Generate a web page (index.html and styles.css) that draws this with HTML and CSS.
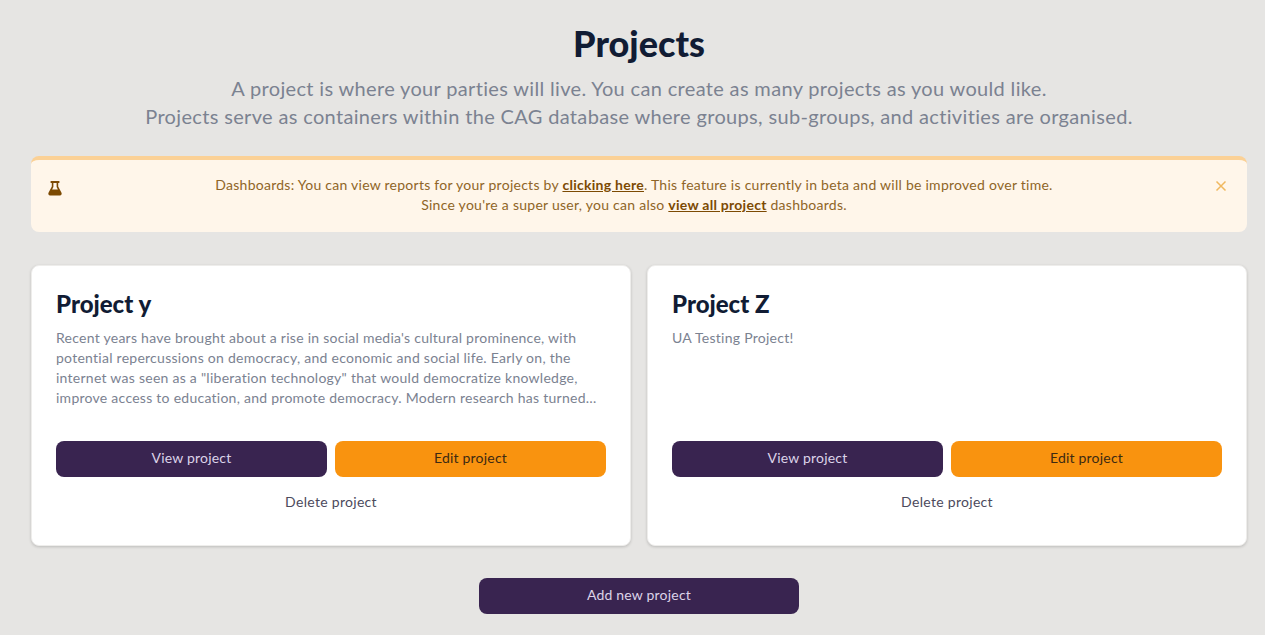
FILE: index.html
```html
<!DOCTYPE html>
<html lang="en">
<head>
<meta charset="utf-8">
<title>Projects</title>
<link rel="stylesheet" href="styles.css">
</head>
<body>
<main class="page">
  <header class="intro">
    <h1 class="title">Projects</h1>
    <p class="lead">A project is where your parties will live. You can create as many projects as you would like.<br>Projects serve as containers within the CAG database where groups, sub-groups, and activities are organised.</p>
  </header>
  <section class="notice">
    <svg class="notice-icon" viewBox="0 0 16 16" width="16" height="16" aria-hidden="true"><path fill="#7c4a03" fill-rule="evenodd" d="M3.6 1h8.8v2h-1.2v3.6l3.3 6.2c.6 1.2-.1 2.7-1.6 2.7H3.1c-1.5 0-2.2-1.5-1.6-2.7l3.3-6.2V3H3.6zM6.4 3v4L5.1 9.4h5.8L9.6 7V3z"/></svg>
    <p class="notice-text">Dashboards: You can view reports for your projects by <a href="#">clicking here</a>. This feature is currently in beta and will be improved over time.<br>Since you're a super user, you can also <a href="#">view all project</a> dashboards.</p>
    <svg class="notice-close" viewBox="0 0 12 12" width="12" height="12" aria-hidden="true"><path d="M1.5 1.5l9 9M10.5 1.5l-9 9" stroke="#f0b85f" stroke-width="1.5" fill="none"/></svg>
  </section>
  <section class="cards">
    <article class="card">
      <h2 class="card-title">Project y</h2>
      <p class="card-text">Recent years have brought about a rise in social media's cultural prominence, with potential repercussions on democracy, and economic and social life. Early on, the internet was seen as a "liberation technology" that would democratize knowledge, improve access to education, and promote democracy. Modern research has turned…</p>
      <div class="card-actions">
        <a class="btn btn-purple" href="#">View project</a>
        <a class="btn btn-orange" href="#">Edit project</a>
      </div>
      <a class="delete" href="#">Delete project</a>
    </article>
    <article class="card">
      <h2 class="card-title">Project Z</h2>
      <p class="card-text">UA Testing Project!</p>
      <div class="card-actions">
        <a class="btn btn-purple" href="#">View project</a>
        <a class="btn btn-orange" href="#">Edit project</a>
      </div>
      <a class="delete" href="#">Delete project</a>
    </article>
  </section>
  <div class="add-row"><a class="btn btn-purple btn-add" href="#">Add new project</a></div>
</main>
</body>
</html>
```
FILE: styles.css
```css
* { box-sizing: border-box; }
html, body { margin: 0; height: 100%; overflow: hidden; }
body { background: #e6e5e3; font-family: "Lato", "Liberation Sans", sans-serif; }
.page { padding: 23px 18px 0 31px; }
.intro { text-align: center; }
.title { margin: 0; font-size: 36px; line-height: 40px; font-weight: 900; color: #111c34; }
.lead { margin: 11px 0 0; font-size: 20px; line-height: 28px; color: #7b8291; letter-spacing: .34px; }
.notice { margin-top: 26px; height: 76px; display: flex; align-items: flex-start; padding: 15px 16px 0; background: #fff6ea; border-top: 4px solid #fbd196; border-radius: 8px; }
.notice-icon { flex: none; margin-top: 5px; }
.notice-text { flex: 1; margin: 0; text-align: center; font-size: 14px; line-height: 20px; color: #8f6527; letter-spacing: .26px; }
.notice-text a { color: #7c4a03; font-weight: 700; }
.notice-close { flex: none; margin: 5px 4px 0 10px; }
.cards { margin-top: 33px; display: grid; grid-template-columns: 600px 600px; gap: 16px; }
.card { height: 281px; display: flex; flex-direction: column; padding: 22px 24px 0; background: #fff; border: 1px solid #eeedeb; border-radius: 8px; box-shadow: 0 1px 3px rgba(0,0,0,.18); }
.card-title { margin: 0; font-size: 24px; line-height: 32px; font-weight: 900; color: #111c34; }
.card-text { margin: 8px 0 0; height: 80px; font-size: 14px; line-height: 20px; color: #7b8291; letter-spacing: .26px; }
.card-actions { margin-top: 33px; display: grid; grid-template-columns: 1fr 1fr; gap: 8px; }
.btn { display: block; height: 36px; line-height: 34px; text-align: center; text-decoration: none; font-size: 14px; letter-spacing: .2px; border-radius: 8px; }
.btn-purple { background: #392450; color: #dcd3e8; }
.btn-orange { background: #f9930f; color: #3d2a12; }
.delete { margin-top: 15px; text-align: center; font-size: 14px; line-height: 20px; color: #4c4a5c; text-decoration: none; letter-spacing: .3px; }
.add-row { margin-top: 32px; display: flex; justify-content: center; }
.btn-add { width: 320px; }
```
